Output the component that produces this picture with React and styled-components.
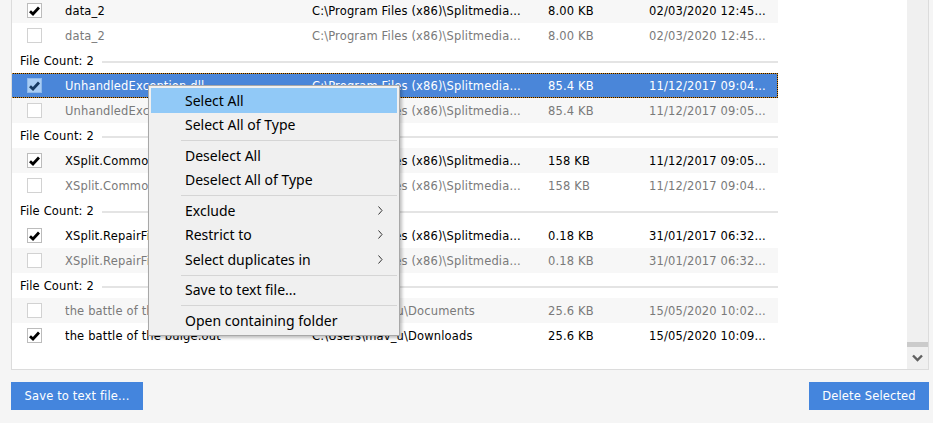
import React from "react";
import styled, { createGlobalStyle, css } from "styled-components";

const GlobalStyle = createGlobalStyle`
  html, body {
    margin: 0;
    padding: 0;
    background: #f5f5f5;
    overflow: hidden;
  }
  * { box-sizing: border-box; }
`;

const groups = [
  [
    { name: "data_2", path: "C:\\Program Files (x86)\\Splitmedia...", size: "8.00 KB", date: "02/03/2020 12:45...", checked: true, shade: true },
    { name: "data_2", path: "C:\\Program Files (x86)\\Splitmedia...", size: "8.00 KB", date: "02/03/2020 12:45..." },
  ],
  [
    { name: "UnhandledException.dll", path: "C:\\Program Files (x86)\\Splitmedia...", size: "85.4 KB", date: "11/12/2017 09:04...", checked: true, selected: true },
    { name: "UnhandledException.dll", path: "C:\\Program Files (x86)\\Splitmedia...", size: "85.4 KB", date: "11/12/2017 09:05...", shade: true },
  ],
  [
    { name: "XSplit.Common.dll", path: "C:\\Program Files (x86)\\Splitmedia...", size: "158 KB", date: "11/12/2017 09:05...", checked: true, shade: true },
    { name: "XSplit.Common.dll", path: "C:\\Program Files (x86)\\Splitmedia...", size: "158 KB", date: "11/12/2017 09:04..." },
  ],
  [
    { name: "XSplit.RepairFile.dll", path: "C:\\Program Files (x86)\\Splitmedia...", size: "0.18 KB", date: "31/01/2017 06:32...", checked: true },
    { name: "XSplit.RepairFile.dll", path: "C:\\Program Files (x86)\\Splitmedia...", size: "0.18 KB", date: "31/01/2017 06:32...", shade: true },
  ],
  [
    { name: "the battle of the bulge.out", path: "C:\\Users\\mav_u\\Documents", size: "25.6 KB", date: "15/05/2020 10:02...", shade: true },
    { name: "the battle of the bulge.out", path: "C:\\Users\\mav_u\\Downloads", size: "25.6 KB", date: "15/05/2020 10:09...", checked: true },
  ],
];

const menuItems = [
  { label: "Select All", hot: true },
  { label: "Select All of Type" },
  "sep",
  { label: "Deselect All" },
  { label: "Deselect All of Type" },
  "sep",
  { label: "Exclude", sub: true },
  { label: "Restrict to", sub: true },
  { label: "Select duplicates in", sub: true },
  "sep",
  { label: "Save to text file..." },
  "sep",
  { label: "Open containing folder" },
];

const Page = styled.div`
  position: relative;
  width: 933px;
  height: 423px;
  font-family: "DejaVu Sans", Tahoma, sans-serif;
  font-size: 11.5px;
  letter-spacing: 0.15px;
`;

const Panel = styled.div`
  margin-left: 11px;
  width: 918px;
  height: 370px;
  background: #fff;
  border: 1px solid #dcdcdc;
  border-top: none;
  display: flex;
  overflow: hidden;
`;

const List = styled.div`
  flex: 1;
  margin-top: -2px;
`;

const GroupHeader = styled.div`
  width: 766px;
  height: 25px;
  display: flex;
  align-items: center;
  gap: 8px;
  padding-left: 8px;
  color: #000;
  &::after {
    content: "";
    flex: 1;
    height: 2px;
    margin-top: 3px;
    background: #e4e4e4;
  }
`;

const Row = styled.div`
  width: 766px;
  height: 25px;
  display: grid;
  grid-template-columns: 53px 247px 236px 101px 1fr;
  align-items: center;
  color: ${(p) => (p.$checked ? "#000" : "#7a7a7a")};
  background: ${(p) => (p.$shade ? "#f7f7f7" : "#fff")};
  ${(p) =>
    p.$selected &&
    css`
      color: #fff;
      border: 1px dotted #111;
      background: linear-gradient(#4a86d9, #4a86d9) padding-box, #d98a1c border-box;
      margin-left: -1px;
      width: 767px;
    `}
`;

const Cell = styled.span`
  white-space: nowrap;
  overflow: hidden;
`;

const CheckBox = styled.span`
  margin-left: 15px;
  width: 15px;
  height: 15px;
  display: flex;
  align-items: center;
  justify-content: center;
  border: 1px solid ${(p) => (p.$selected ? "#8fb9ea" : p.$checked ? "#bcbcbc" : "#d2d2d2")};
  background: ${(p) => (p.$selected ? "#a9cdf4" : "#fff")};
`;

const Scrollbar = styled.div`
  width: 21px;
  background: #f0f0f0;
  display: flex;
  flex-direction: column;
`;

const Track = styled.div`
  flex: 1;
`;

const Thumb = styled.div`
  height: 5px;
  background: #cbcbcb;
`;

const Arrow = styled.div`
  height: 22px;
  display: flex;
  align-items: center;
  justify-content: center;
`;

const Footer = styled.div`
  display: flex;
  justify-content: space-between;
  padding: 12px 4px 0 11px;
`;

const Button = styled.button`
  height: 28px;
  width: ${(p) => p.$w}px;
  border: none;
  background: #4485dd;
  color: #fff;
  font-family: "DejaVu Sans", Tahoma, sans-serif;
  font-size: 11.5px;
  letter-spacing: 0.15px;
  padding: 0;
`;

const Menu = styled.div`
  position: absolute;
  left: 148px;
  top: 85px;
  width: 252px;
  padding: 2px;
  background: #f0f0f0;
  border: 1px solid #a8a8a8;
  box-shadow: 2px 2px 3px rgba(0, 0, 0, 0.25);
  font-family: "Noto Sans", "Open Sans", sans-serif;
  font-size: 14px;
  letter-spacing: 0;
  color: #000;
`;

const MenuItem = styled.div`
  height: 24.5px;
  display: flex;
  align-items: center;
  justify-content: space-between;
  padding: 0 14px 0 34px;
  background: ${(p) => (p.$hot ? "#91c9f7" : "transparent")};
`;

const Separator = styled.div`
  height: 1px;
  margin: 3px 0 2px 30px;
  background: #d5d5d5;
`;

const Check = ({ color }) => (
  <svg width="11" height="10" viewBox="0 0 11 10">
    <path d="M1 5.2 L4 8 L10 1.5" fill="none" stroke={color} strokeWidth="2.8" />
  </svg>
);

const Chevron = () => (
  <svg width="5" height="9" viewBox="0 0 5 9">
    <path d="M0.5 0.5 L4 4.5 L0.5 8.5" fill="none" stroke="#333" strokeWidth="1" />
  </svg>
);

const ChevronDown = () => (
  <svg width="11" height="8" viewBox="0 0 11 8">
    <path d="M1 1.5 L5.5 6 L10 1.5" fill="none" stroke="#606060" strokeWidth="2.4" />
  </svg>
);

export default function App() {
  return (
    <Page>
      <GlobalStyle />
      <Panel>
        <List>
          {groups.map((g, gi) => (
            <React.Fragment key={gi}>
              {gi > 0 && <GroupHeader>File Count: 2</GroupHeader>}
              {g.map((r, ri) => (
                <Row key={ri} $checked={r.checked} $shade={r.shade} $selected={r.selected}>
                  <CheckBox $checked={r.checked} $selected={r.selected}>
                    {r.checked && <Check color={r.selected ? "#173a63" : "#000"} />}
                  </CheckBox>
                  <Cell>{r.name}</Cell>
                  <Cell>{r.path}</Cell>
                  <Cell>{r.size}</Cell>
                  <Cell>{r.date}</Cell>
                </Row>
              ))}
            </React.Fragment>
          ))}
        </List>
        <Scrollbar>
          <Track />
          <Thumb />
          <Arrow>
            <ChevronDown />
          </Arrow>
        </Scrollbar>
      </Panel>
      <Footer>
        <Button $w={132}>Save to text file...</Button>
        <Button $w={120}>Delete Selected</Button>
      </Footer>
      <Menu>
        {menuItems.map((m, i) =>
          m === "sep" ? (
            <Separator key={i} />
          ) : (
            <MenuItem key={i} $hot={m.hot}>
              <span>{m.label}</span>
              {m.sub && <Chevron />}
            </MenuItem>
          )
        )}
      </Menu>
    </Page>
  );
}
